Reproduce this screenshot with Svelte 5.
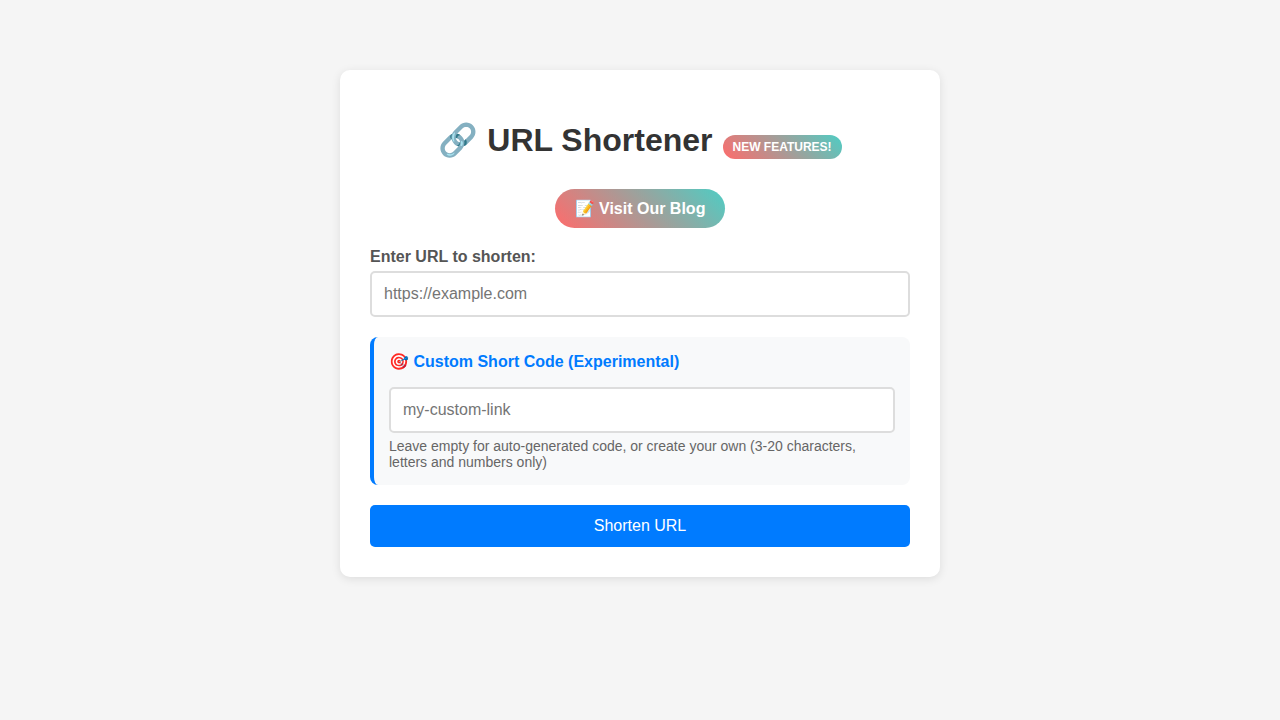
<script>
  let url = $state('');
  let code = $state('');
</script>

<main class="container">
  <h1>🔗 URL Shortener<span class="badge">NEW FEATURES!</span></h1>
  <div class="links">
    <a class="blog" href="#blog">📝 Visit Our Blog</a>
  </div>
  <form onsubmit={(e) => e.preventDefault()}>
    <div class="group">
      <label for="url">Enter URL to shorten:</label>
      <input id="url" type="url" placeholder="https://example.com" bind:value={url} />
    </div>
    <div class="custom">
      <h4><label for="code">🎯 Custom Short Code (Experimental)</label></h4>
      <input id="code" type="text" placeholder="my-custom-link" bind:value={code} />
      <p>Leave empty for auto-generated code, or create your own (3-20 characters, letters and numbers only)</p>
    </div>
    <button type="submit">Shorten URL</button>
  </form>
</main>

<style>
  :global(body) {
    background: #f5f5f5;
    font-family: 'Liberation Sans', Arial, sans-serif;
  }
  .container {
    box-sizing: border-box;
    max-width: 600px;
    margin: 70px auto 50px;
    padding: 30px;
    background: white;
    border-radius: 10px;
    box-shadow: 0 2px 10px rgba(0, 0, 0, 0.1);
  }
  h1 {
    margin: 21px 0 30px;
    color: #333;
    font-size: 32px;
    text-align: center;
  }
  .badge {
    display: inline-block;
    margin-left: 10px;
    padding: 5px 10px;
    border-radius: 15px;
    background: linear-gradient(45deg, #ff6b6b, #4ecdc4);
    color: white;
    font-size: 12px;
    font-weight: bold;
  }
  .links {
    margin: 20px 0;
    text-align: center;
  }
  .blog {
    display: inline-block;
    padding: 10px 20px;
    border-radius: 25px;
    background: linear-gradient(45deg, #ff6b6b, #4ecdc4);
    color: white;
    font-weight: bold;
    text-decoration: none;
  }
  .group {
    margin-bottom: 20px;
  }
  label {
    display: block;
    margin-bottom: 5px;
    color: #555;
    font-weight: bold;
  }
  input {
    box-sizing: border-box;
    display: block;
    width: 100%;
    padding: 12px;
    border: 2px solid #ddd;
    border-radius: 5px;
    font: 16px 'Liberation Sans', Arial, sans-serif;
  }
  .custom {
    margin: 20px 0;
    padding: 15px;
    border-left: 4px solid #007bff;
    border-radius: 8px;
    background: #f8f9fa;
  }
  h4 {
    margin: 0 0 16px;
    font-size: 16px;
  }
  h4 label {
    margin: 0;
    color: #007bff;
  }
  p {
    margin: 5px 0 0;
    color: #666;
    font-size: 14px;
  }
  button {
    width: 100%;
    padding: 12px;
    border: none;
    border-radius: 5px;
    background: #007bff;
    color: white;
    font: 16px 'Liberation Sans', Arial, sans-serif;
    cursor: pointer;
  }
</style>
